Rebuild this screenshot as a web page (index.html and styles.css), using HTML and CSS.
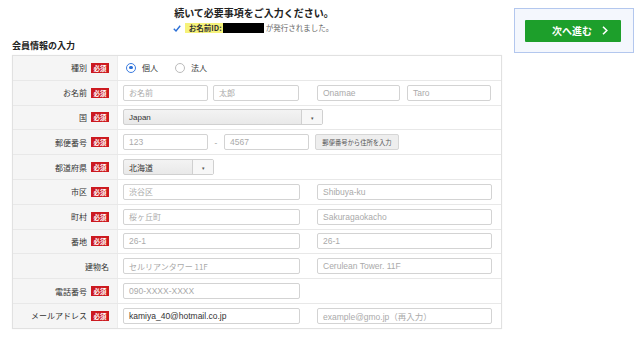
FILE: index.html
```html
<!DOCTYPE html>
<html lang="ja">
<head>
<meta charset="utf-8">
<link rel="stylesheet" href="styles.css">
</head>
<body>
<div class="page">
  <div class="main">
    <div class="head">
      <h1 class="title">続いて必要事項をご入力ください。</h1>
      <p class="issued"><svg class="check" width="8" height="7" viewBox="0 0 8 7"><path d="M0.8 3.8 L3 6 L7.2 0.8" fill="none" stroke="#2b6fd6" stroke-width="1.4"/></svg><span class="hl">お名前ID:<span class="mask"></span></span><span class="done">が発行されました。</span></p>
    </div>
    <h2 class="section">会員情報の入力</h2>
    <div class="form">
      <div class="row">
        <div class="lab"><span>種別</span><em class="req">必須</em></div>
        <div class="fld">
          <span class="radio on"></span><span class="rtext">個人</span>
          <span class="radio"></span><span class="rtext">法人</span>
        </div>
      </div>
      <div class="row">
        <div class="lab"><span>お名前</span><em class="req">必須</em></div>
        <div class="fld halves">
          <div class="pair"><span class="inp ph w85">お名前</span><span class="inp ph w86">太郎</span></div>
          <div class="pair"><span class="inp ph w83 latin">Onamae</span><span class="inp ph w84 latin">Taro</span></div>
        </div>
      </div>
      <div class="row">
        <div class="lab"><span>国</span><em class="req">必須</em></div>
        <div class="fld">
          <span class="sel w200"><span class="val latin">Japan</span><span class="arr">▾</span></span>
        </div>
      </div>
      <div class="row">
        <div class="lab"><span>郵便番号</span><em class="req">必須</em></div>
        <div class="fld">
          <span class="inp ph w85 latin">123</span><span class="dash">-</span><span class="inp ph w85 latin">4567</span><span class="btn">郵便番号から住所を入力</span>
        </div>
      </div>
      <div class="row">
        <div class="lab"><span>都道府県</span><em class="req">必須</em></div>
        <div class="fld">
          <span class="sel w91"><span class="val">北海道</span><span class="arr">▾</span></span>
        </div>
      </div>
      <div class="row">
        <div class="lab"><span>市区</span><em class="req">必須</em></div>
        <div class="fld halves">
          <span class="inp ph">渋谷区</span><span class="inp ph latin">Shibuya-ku</span>
        </div>
      </div>
      <div class="row">
        <div class="lab"><span>町村</span><em class="req">必須</em></div>
        <div class="fld halves">
          <span class="inp ph">桜ヶ丘町</span><span class="inp ph latin">Sakuragaokacho</span>
        </div>
      </div>
      <div class="row">
        <div class="lab"><span>番地</span><em class="req">必須</em></div>
        <div class="fld halves">
          <span class="inp ph latin">26-1</span><span class="inp ph latin">26-1</span>
        </div>
      </div>
      <div class="row">
        <div class="lab"><span>建物名</span></div>
        <div class="fld halves">
          <span class="inp ph">セルリアンタワー 11F</span><span class="inp ph latin">Cerulean Tower. 11F</span>
        </div>
      </div>
      <div class="row">
        <div class="lab"><span>電話番号</span><em class="req">必須</em></div>
        <div class="fld halves">
          <span class="inp ph latin">090-XXXX-XXXX</span>
        </div>
      </div>
      <div class="row last">
        <div class="lab"><span>メールアドレス</span><em class="req">必須</em></div>
        <div class="fld halves">
          <span class="inp latin">kamiya_40@hotmail.co.jp</span><span class="inp ph latin">example@gmo.jp（再入力）</span>
        </div>
      </div>
    </div>
  </div>
  <div class="side">
    <div class="nextbox">
      <button class="next" type="button">次へ進む<svg class="chev" width="6" height="9" viewBox="0 0 6 9"><path d="M1 0.8 L4.8 4.5 L1 8.2" fill="none" stroke="#fff" stroke-width="1.6"/></svg></button>
    </div>
  </div>
</div>
</body>
</html>
```

FILE: styles.css
```css
html, body {
  margin: 0;
  padding: 0;
  background: #fff;
}
body {
  font-family: "Noto Sans CJK JP", "Liberation Sans", sans-serif;
  color: #333;
  width: 640px;
  height: 338px;
  overflow: hidden;
}
.page {
  display: flex;
  align-items: flex-start;
}
.main {
  margin-left: 12px;
  width: 490px;
}
.head {
  text-align: center;
  padding-top: 6px;
}
.title {
  margin: 0 6px 0 0;
  font-size: 10px;
  line-height: 14px;
  font-weight: 700;
  color: #222;
}
.issued {
  margin: 2px 8px 0 0;
  font-size: 7.5px;
  line-height: 12px;
  height: 12px;
  display: flex;
  justify-content: center;
  align-items: center;
}
.check {
  margin-right: 4px;
}
.hl {
  background: #f6f27a;
  display: inline-flex;
  align-items: center;
  height: 10px;
  padding-left: 4px;
  color: #333;
  font-weight: 700;
}
.mask {
  display: inline-block;
  width: 41px;
  height: 10px;
  background: #000;
  margin-left: 1px;
}
.done {
  color: #666;
  margin-left: 2px;
}
.section {
  margin: 6px 0 0 0;
  font-size: 9px;
  line-height: 12px;
  font-weight: 700;
  color: #222;
}
.form {
  margin-top: 3px;
  border: 1px solid #e1e1e1;
  box-shadow: 0 0 1px rgba(0,0,0,0.08);
  width: 488px;
}
.row {
  display: flex;
  height: 23.8px;
  border-bottom: 1px solid #e8e8e8;
}
.row.last {
  border-bottom: 0;
}
.lab {
  width: 96px;
  padding-right: 8px;
  background: #f5f5f5;
  display: flex;
  align-items: center;
  justify-content: flex-end;
  font-size: 8px;
  color: #333;
  border-right: 1px solid #ececec;
}
.req {
  font-style: normal;
  background: #cc1a20;
  color: #fff;
  font-size: 6.5px;
  font-weight: 700;
  width: 18px;
  height: 10px;
  line-height: 10px;
  text-align: center;
  margin-left: 4px;
}
.fld {
  flex: 1;
  display: flex;
  align-items: center;
  padding-left: 5px;
  font-size: 8px;
}
.halves {
  display: grid;
  grid-template-columns: 177px 175px;
  column-gap: 17px;
  align-content: center;
}
.pair {
  display: flex;
  gap: 5px;
}
.pair + .pair {
  gap: 7px;
}
.inp {
  box-sizing: border-box;
  height: 16px;
  border: 1px solid #d3d3d3;
  border-radius: 2px;
  display: flex;
  align-items: center;
  padding-left: 5px;
  font-size: 8px;
  color: #333;
  white-space: nowrap;
  overflow: hidden;
  background: #fff;
}
.ph {
  color: #aaa;
}
.latin {
  font-family: "Liberation Sans", "Noto Sans CJK JP", sans-serif;
  font-size: 8.5px;
}
.w85 { width: 85px; }
.w86 { width: 86px; }
.w83 { width: 83px; }
.w84 { width: 84px; }
.radio {
  box-sizing: border-box;
  width: 10px;
  height: 10px;
  border-radius: 50%;
  border: 1px solid #bbb;
  background: #fff;
  margin-left: 3px;
  margin-right: 6px;
  position: relative;
}
.radio.on {
  border: 1.2px solid #3a7be0;
}
.radio.on::after {
  content: "";
  position: absolute;
  left: 2px;
  top: 2px;
  width: 3.6px;
  height: 3.6px;
  border-radius: 50%;
  background: #2b6fd6;
}
.rtext {
  margin-right: 14px;
  font-size: 8px;
}
.sel {
  box-sizing: border-box;
  height: 16px;
  border: 1px solid #d0d0d0;
  border-radius: 2px;
  background: linear-gradient(#f3f3f3, #e9e9e9);
  display: flex;
  align-items: center;
}
.w200 { width: 200px; }
.w91 { width: 91px; }
.sel .val {
  flex: 1;
  padding-left: 5px;
  font-size: 8px;
  color: #333;
}
.sel .arr {
  width: 20px;
  height: 100%;
  border-left: 1px solid #d0d0d0;
  background: #f7f7f7;
  font-size: 5px;
  color: #555;
  display: flex;
  align-items: center;
  justify-content: center;
}
.dash {
  width: 16px;
  text-align: center;
  color: #888;
  font-size: 8px;
}
.btn {
  box-sizing: border-box;
  margin-left: 6px;
  height: 16px;
  width: 84px;
  border: 1px solid #d6d6d6;
  border-radius: 2px;
  background: #eeeeee;
  font-size: 6.3px;
  color: #555;
  display: flex;
  align-items: center;
  justify-content: center;
}
.side {
  margin-left: 12px;
  margin-top: 8px;
}
.nextbox {
  box-sizing: border-box;
  width: 120px;
  height: 45px;
  border: 1.5px solid #b3c7ee;
  background: #f4f7fd;
  display: flex;
  align-items: center;
  justify-content: center;
}
.next {
  width: 96px;
  height: 22px;
  border: 0;
  border-radius: 1px;
  background: #1d9f2b;
  color: #fff;
  font-family: "Noto Sans CJK JP", sans-serif;
  font-size: 10px;
  font-weight: 700;
  display: flex;
  align-items: center;
  justify-content: center;
  padding: 0 0 0 14px;
  margin-left: -2px;
}
.chev {
  margin-left: 10px;
}
```
